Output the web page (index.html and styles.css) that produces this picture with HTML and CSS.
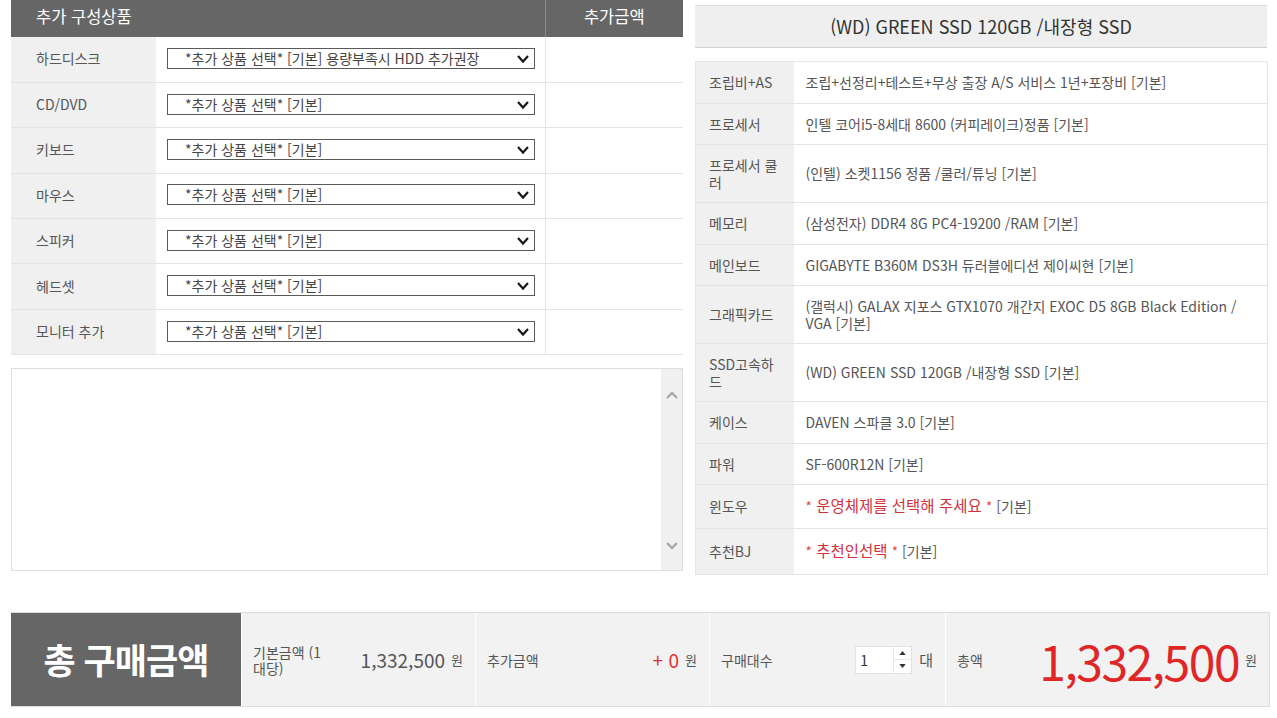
FILE: index.html
```html
<!DOCTYPE html>
<html lang="ko">
<head>
<meta charset="utf-8">
<title>견적</title>
<link rel="stylesheet" href="styles.css">
</head>
<body>
<div class="page">
  <div class="top">
    <div class="left">
      <table class="opt">
        <colgroup><col class="c1"><col class="c2"><col class="c3"></colgroup>
        <thead>
          <tr><th class="h-name" colspan="2">추가 구성상품</th><th class="h-price">추가금액</th></tr>
        </thead>
        <tbody>
          <tr><td class="lbl">하드디스크</td><td class="sel-cell"><div class="sel"><select><option>*추가 상품 선택* [기본] 용량부족시 HDD 추가권장</option></select><svg class="chev" viewBox="0 0 14 10"><polyline points="2,2 7,7.5 12,2"/></svg></div></td><td class="price"></td></tr>
          <tr><td class="lbl">CD/DVD</td><td class="sel-cell"><div class="sel"><select><option>*추가 상품 선택* [기본]</option></select><svg class="chev" viewBox="0 0 14 10"><polyline points="2,2 7,7.5 12,2"/></svg></div></td><td class="price"></td></tr>
          <tr><td class="lbl">키보드</td><td class="sel-cell"><div class="sel"><select><option>*추가 상품 선택* [기본]</option></select><svg class="chev" viewBox="0 0 14 10"><polyline points="2,2 7,7.5 12,2"/></svg></div></td><td class="price"></td></tr>
          <tr><td class="lbl">마우스</td><td class="sel-cell"><div class="sel"><select><option>*추가 상품 선택* [기본]</option></select><svg class="chev" viewBox="0 0 14 10"><polyline points="2,2 7,7.5 12,2"/></svg></div></td><td class="price"></td></tr>
          <tr><td class="lbl">스피커</td><td class="sel-cell"><div class="sel"><select><option>*추가 상품 선택* [기본]</option></select><svg class="chev" viewBox="0 0 14 10"><polyline points="2,2 7,7.5 12,2"/></svg></div></td><td class="price"></td></tr>
          <tr><td class="lbl">헤드셋</td><td class="sel-cell"><div class="sel"><select><option>*추가 상품 선택* [기본]</option></select><svg class="chev" viewBox="0 0 14 10"><polyline points="2,2 7,7.5 12,2"/></svg></div></td><td class="price"></td></tr>
          <tr><td class="lbl">모니터 추가</td><td class="sel-cell"><div class="sel"><select><option>*추가 상품 선택* [기본]</option></select><svg class="chev" viewBox="0 0 14 10"><polyline points="2,2 7,7.5 12,2"/></svg></div></td><td class="price"></td></tr>
        </tbody>
      </table>
      <div class="memo">
        <div class="memo-body"></div>
        <div class="scroll">
          <svg class="sarrow" viewBox="0 0 14 10"><polyline points="2,8 7,3 12,8"/></svg>
          <svg class="sarrow" viewBox="0 0 14 10"><polyline points="2,2 7,7 12,2"/></svg>
        </div>
      </div>
    </div>
    <div class="right">
      <div class="title">(WD) GREEN SSD 120GB /내장형 SSD</div>
      <table class="spec">
        <colgroup><col class="s1"><col class="s2"></colgroup>
        <tbody>
          <tr><th>조립비+AS</th><td>조립+선정리+테스트+무상 출장 A/S 서비스 1년+포장비 [기본]</td></tr>
          <tr><th>프로세서</th><td>인텔 코어i5-8세대 8600 (커피레이크)정품 [기본]</td></tr>
          <tr><th>프로세서 쿨러</th><td>(인텔) 소켓1156 정품 /쿨러/튜닝 [기본]</td></tr>
          <tr><th>메모리</th><td>(삼성전자) DDR4 8G PC4-19200 /RAM [기본]</td></tr>
          <tr><th>메인보드</th><td>GIGABYTE B360M DS3H 듀러블에디션 제이씨현 [기본]</td></tr>
          <tr><th>그래픽카드</th><td>(갤럭시) GALAX 지포스 GTX1070 개간지 EXOC D5 8GB Black Edition / VGA [기본]</td></tr>
          <tr><th>SSD고속하드</th><td>(WD) GREEN SSD 120GB /내장형 SSD [기본]</td></tr>
          <tr><th>케이스</th><td>DAVEN 스파클 3.0 [기본]</td></tr>
          <tr><th>파워</th><td>SF-600R12N [기본]</td></tr>
          <tr class="tall"><th>윈도우</th><td><span class="red"><span class="ast">*</span> 운영체제를 선택해 주세요 <span class="ast">*</span></span> [기본]</td></tr>
          <tr class="last"><th>추천BJ</th><td><span class="red"><span class="ast">*</span> 추천인선택 <span class="ast">*</span></span> [기본]</td></tr>
        </tbody>
      </table>
    </div>
  </div>

  <div class="total">
    <div class="total-title">총 구매금액</div>
    <div class="cell c-base">
      <span class="clabel narrow">기본금액 (1 대당)</span>
      <span class="val"><span class="num">1,332,500</span><span class="won">원</span></span>
    </div>
    <div class="cell c-add">
      <span class="clabel">추가금액</span>
      <span class="val"><span class="num redn">+ 0</span><span class="won">원</span></span>
    </div>
    <div class="cell c-qty">
      <span class="clabel">구매대수</span>
      <span class="val">
        <span class="qty">
          <span class="qty-num">1</span>
          <span class="spin">
            <span class="sp-up"><svg viewBox="0 0 8 5"><polygon points="0,5 4,0 8,5"/></svg></span>
            <span class="sp-down"><svg viewBox="0 0 8 5"><polygon points="0,0 8,0 4,5"/></svg></span>
          </span>
        </span>
        <span class="unit">대</span>
      </span>
    </div>
    <div class="cell c-sum">
      <span class="clabel">총액</span>
      <span class="val"><span class="big">1,332,500</span><span class="won">원</span></span>
    </div>
  </div>
</div>
</body>
</html>
```

FILE: styles.css
```css
* { box-sizing: border-box; }

body {
  margin: 0;
  background: #fff;
  font-family: "Noto Sans CJK KR", "Noto Sans", sans-serif;
  font-size: 14px;
  color: #555;
}

.page {
  padding: 0 7px 0 11px;
}

.top {
  display: flex;
  align-items: flex-start;
  gap: 12px;
}

.left { width: 672px; }
.right { width: 572px; padding-top: 5px; }

table { border-collapse: collapse; }

/* option table */
.opt { width: 672px; table-layout: fixed; }
.opt .c1 { width: 145px; }
.opt .c2 { width: 389px; }
.opt .c3 { width: 138px; }

.opt th {
  background: #666;
  color: #fff;
  font-weight: normal;
  font-size: 16.5px;
  height: 37px;
  padding: 0 0 5px;
  line-height: 20px;
}
.opt .h-name { text-align: left; padding-left: 25px; }
.opt .h-price { text-align: center; border-left: 1px solid #8a8a8a; }

.opt td {
  height: 45.4px;
  padding: 0 0 2px;
  border-bottom: 1px solid #e4e4e4;
  line-height: 18px;
}
.opt .lbl {
  background: #f0f0f0;
  padding-left: 25px;
  color: #555;
}
.opt .sel-cell { padding-left: 11px; }
.opt .price { border-left: 1px solid #e4e4e4; }

.sel {
  position: relative;
  width: 368px;
  height: 21px;
}
.sel select {
  appearance: none;
  -webkit-appearance: none;
  width: 100%;
  height: 21px;
  border: 1px solid #5a5a5a;
  border-radius: 0;
  background: #fff;
  padding: 0 0 2px 17px;
  font-family: "Noto Sans CJK KR", "Noto Sans", sans-serif;
  font-size: 14px;
  line-height: 18px;
  color: #444;
}
.chev {
  position: absolute;
  right: 5px;
  top: 6px;
  width: 14px;
  height: 10px;
  fill: none;
  stroke: #1a1a1a;
  stroke-width: 2.2;
}

/* memo box */
.memo {
  margin-top: 13px;
  height: 203px;
  border: 1px solid #dedede;
  display: flex;
}
.memo-body { flex: 1; }
.scroll {
  width: 21px;
  background: #f0f0f0;
  display: flex;
  flex-direction: column;
  justify-content: space-between;
  align-items: center;
  padding: 21px 0 19px;
}
.sarrow {
  width: 14px;
  height: 10px;
  fill: none;
  stroke: #a8a8a8;
  stroke-width: 2.4;
}

/* right */
.title {
  height: 43px;
  background: #efefef;
  border-top: 1px solid #dcdcdc;
  border-bottom: 1px solid #cfcfcf;
  display: flex;
  align-items: center;
  justify-content: center;
  font-size: 18px;
  color: #333;
  padding-bottom: 2px;
}

.spec {
  margin-top: 13px;
  width: 572px;
  table-layout: fixed;
  border: 1px solid #e6e6e6;
}
.spec .s1 { width: 98px; }
.spec .s2 { width: 474px; }
.spec th, .spec td {
  padding: 12px 12px 12px 12px;
  line-height: 16.5px;
  border-bottom: 1px solid #e4e4e4;
  text-align: left;
  font-weight: normal;
  vertical-align: middle;
}
.spec th {
  background: #f0f0f0;
  padding-left: 13px;
  padding-right: 7px;
  word-break: break-all;
  color: #555;
}
.spec td { color: #555; padding-left: 12px; }
.spec .tall th, .spec .tall td { padding-top: 13px; padding-bottom: 13px; }
.spec .last th, .spec .last td { padding-top: 14.5px; padding-bottom: 14.5px; }

.red {
  color: #d2313a;
  font-size: 15.5px;
  line-height: 15px;
}
.ast { font-size: 13.5px; line-height: 12px; color: #d8474e; }

/* total bar */
.total {
  margin-top: 37px;
  width: 1259px;
  height: 95px;
  display: flex;
  border: 1px solid #dcdcdc;
  border-left: 0;
}
.total-title {
  width: 230px;
  background: #666;
  color: #fff;
  font-size: 35px;
  font-weight: bold;
  display: flex;
  align-items: center;
  justify-content: center;
  padding-bottom: 2px;
  letter-spacing: -1px;
}
.cell {
  background: #f2f2f2;
  border-left: 1px solid #fff;
  display: flex;
  align-items: center;
  justify-content: space-between;
  padding: 0 12px 0 11px;
}
.c-base { width: 234px; }
.c-add { width: 234px; }
.c-qty { width: 236px; }
.c-sum { flex: 1; }

.clabel { color: #555; font-size: 14px; line-height: 16px; }
.narrow { width: 76px; }

.val { display: flex; align-items: center; }
.num { font-size: 19px; color: #555; }
.redn { color: #e03030; }
.won { font-size: 13px; color: #555; margin-left: 6px; }

.qty {
  display: flex;
  width: 57px;
  height: 28px;
  background: #fff;
  border: 1px solid #e2e2e2;
}
.qty-num {
  flex: 1;
  padding-left: 4px;
  line-height: 26px;
  color: #333;
  font-size: 14px;
}
.spin {
  width: 18px;
  display: flex;
  flex-direction: column;
  border-left: 1px solid #e8e8e8;
}
.sp-up, .sp-down {
  flex: 1;
  display: flex;
  align-items: center;
  justify-content: center;
}
.sp-up { border-bottom: 1px solid #e8e8e8; }
.spin svg { width: 7px; height: 4px; fill: #333; }
.unit { margin-left: 7px; font-size: 15px; color: #555; }

.big {
  font-size: 48px;
  color: #e02626;
  line-height: 50px;
  letter-spacing: -1.5px;
}
```
